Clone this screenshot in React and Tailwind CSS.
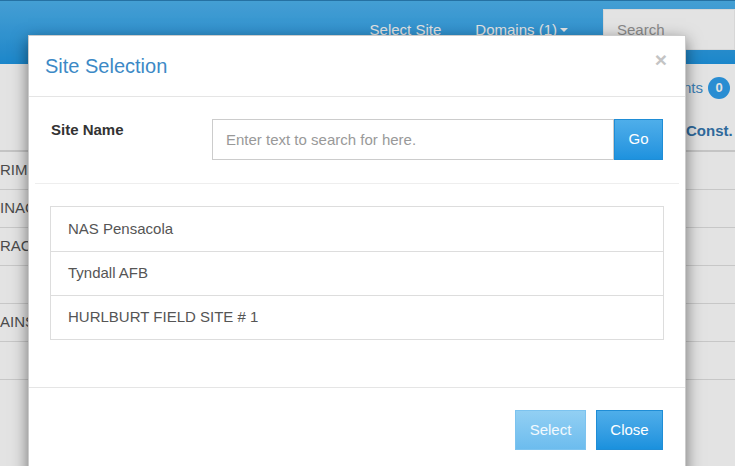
import React from 'react';

const rows = ['RIM', 'INAC', 'RAC', '', 'AINS', ''];
const sites = ['NAS Pensacola', 'Tyndall AFB', 'HURLBURT FIELD SITE # 1'];

// Page behind the dialog: navbar + a table that is mostly covered
const BackgroundPage = () => (
  <div className="w-full">
    <div className="h-[64px] border-t border-[#2a7fb8] bg-gradient-to-b from-[#4db3ee] to-[#1f97e3] flex items-start justify-end pt-[8px]">
      <span className="leading-[41px] text-[15px] text-white mr-[34px]">Select Site</span>
      <span className="leading-[41px] text-[15px] text-white mr-[35px] flex items-center">
        Domains (1)
        <span className="ml-[3px] border-x-[4px] border-t-[4px] border-x-transparent border-t-white"></span>
      </span>
      <div className="w-[132px] h-[41px] bg-white border border-[#f2f2f2] pl-[13px] leading-[39px] text-[15px] text-[#9a9a9a]">
        Search
      </div>
    </div>

    <div className="h-[48px] flex items-center justify-end pr-[5px]">
      <span className="text-[15px] text-[#4590cc]">Comments</span>
      <span className="ml-[5px] w-[22px] h-[22px] rounded-full bg-[#2f9fec] text-white text-[13px] font-bold flex items-center justify-center">0</span>
    </div>

    <div className="h-[40px] flex items-center justify-end border-b-2 border-[#dddddd] pt-[1px]">
      <span className="w-[49px] text-[15px] font-bold text-[#3577af]">Const.</span>
    </div>

    {rows.map((r, i) => (
      <div key={i} className="h-[38px] flex items-center border-b border-[#e0e0e0]">
        <span className="text-[15px] text-[#555555]">{r}</span>
      </div>
    ))}
  </div>
);

const SiteSelectionModal = () => (
  <div className="absolute left-[28px] top-[35px] w-[658px] h-[460px] bg-white border border-black/20 shadow-[0_5px_15px_rgba(0,0,0,0.5)]">
    {/* header */}
    <div className="h-[61px] border-b border-[#e5e5e5] flex items-center justify-between pl-[16px] pr-[18px]">
      <h4 className="text-[20px] text-[#3c89c6]">Site Selection</h4>
      <span className="text-[21px] font-bold text-[#c4c4c4] leading-none -mt-[14px]">×</span>
    </div>

    {/* body */}
    <div className="pt-[22px] pb-[47px]">
      <div className="flex items-start px-[22px]">
        <label className="w-[161px] text-[15px] font-bold text-[#333333]">Site Name</label>
        <div className="flex-1 flex h-[41px]">
          <div className="flex-1 border border-[#cccccc] pl-[13px] leading-[39px] text-[15px] text-[#999999]">
            Enter text to search for here.
          </div>
          <button className="w-[49px] h-[41px] bg-gradient-to-b from-[#4eaeea] to-[#1d92de] border border-[#1f8dd6] text-white text-[15px]">
            Go
          </button>
        </div>
      </div>

      <div className="mx-[6px] mt-[23px] border-t border-[#eeeeee]"></div>

      <div className="mx-[21px] mt-[22px] border border-[#dddddd]">
        {sites.map((s, i) => (
          <div
            key={s}
            className={`h-[44px] flex items-center pl-[17px] text-[15px] text-[#555555] ${i > 0 ? 'border-t border-[#dddddd]' : ''}`}
          >
            {s}
          </div>
        ))}
      </div>
    </div>

    {/* footer */}
    <div className="border-t border-[#e5e5e5] flex justify-end gap-[10px] pt-[22px] pr-[22px]">
      <button className="w-[71px] h-[40px] bg-gradient-to-b from-[#92cff3] to-[#6cbcee] border border-[#7cc3ef] text-white/90 text-[15px] pt-[1px]">
        Select
      </button>
      <button className="w-[67px] h-[40px] bg-gradient-to-b from-[#4eaeea] to-[#1a91dd] border border-[#1f8dd6] text-white text-[15px] pt-[1px]">
        Close
      </button>
    </div>
  </div>
);

export default function App() {
  return (
    <div className="relative w-[735px] h-[466px] overflow-hidden bg-white font-['Liberation_Sans',Arial,sans-serif]">
      <BackgroundPage />
      {/* backdrop */}
      <div className="absolute inset-0 bg-black/[0.11]"></div>
      <SiteSelectionModal />
    </div>
  );
}
